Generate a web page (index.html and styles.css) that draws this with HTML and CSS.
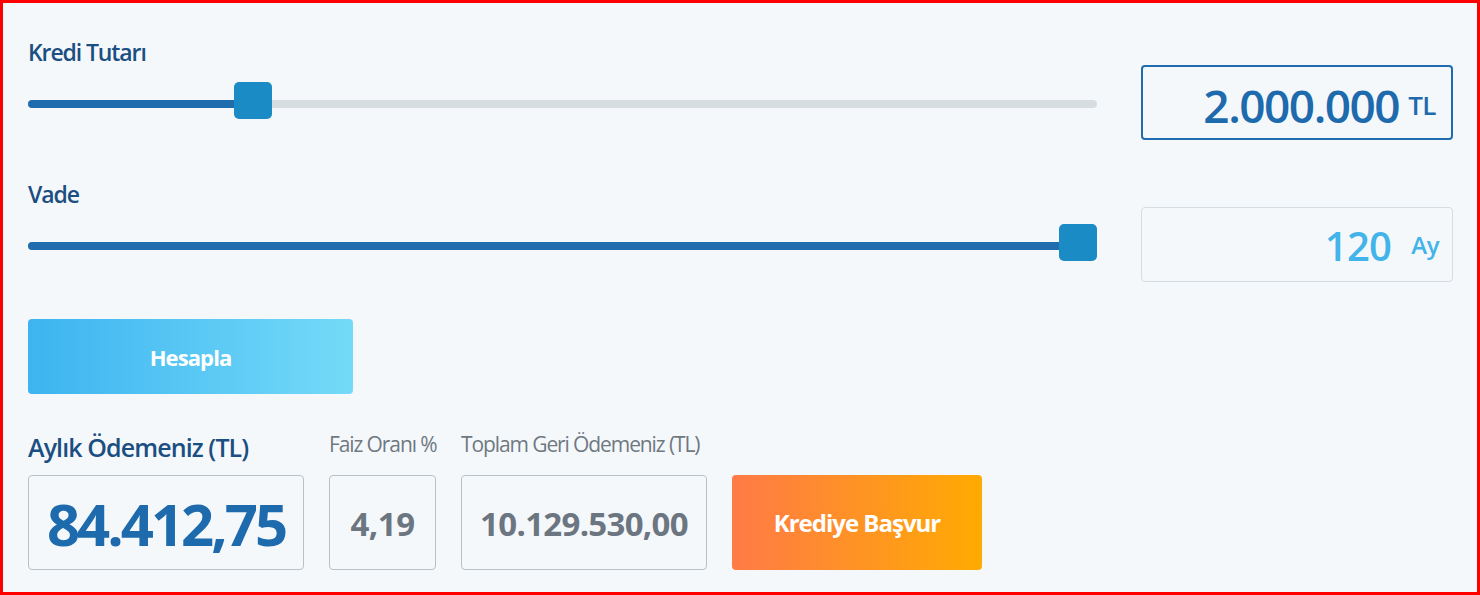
FILE: index.html
```html
<!DOCTYPE html>
<html lang="tr">
<head>
<meta charset="utf-8">
<title>Kredi Hesaplama</title>
<link rel="stylesheet" href="styles.css">
</head>
<body>
<div class="frame">
  <div class="field-row">
    <div class="field-main">
      <div class="field-label">Kredi Tutarı</div>
      <div class="slider" style="--p:0.2">
        <div class="track"><div class="fill"></div></div>
        <div class="thumb"></div>
      </div>
    </div>
    <div class="value-box value-box--active">
      <span class="value-text"><span class="amount">2.000.000</span><span class="unit unit--tl">TL</span></span>
    </div>
  </div>

  <div class="field-row field-row--second">
    <div class="field-main">
      <div class="field-label">Vade</div>
      <div class="slider" style="--p:1">
        <div class="track"><div class="fill"></div></div>
        <div class="thumb"></div>
      </div>
    </div>
    <div class="value-box value-box--term">
      <span class="value-text"><span class="term">120</span><span class="unit unit--ay">Ay</span></span>
    </div>
  </div>

  <button class="btn-calc">Hesapla</button>

  <div class="results">
    <div class="res-label res-label--main">Aylık Ödemeniz (TL)</div>
    <div class="res-label">Faiz Oranı %</div>
    <div class="res-label">Toplam Geri Ödemeniz (TL)</div>
    <div class="res-empty"></div>
    <div class="res-box res-box--main">84.412,75</div>
    <div class="res-box res-box--rate">4,19</div>
    <div class="res-box">10.129.530,00</div>
    <button class="btn-apply">Krediye Başvur</button>
  </div>
</div>
</body>
</html>
```
FILE: styles.css
```css
html, body {
  margin: 0;
  padding: 0;
}

body {
  font-family: "Open Sans", "Noto Sans", sans-serif;
  font-stretch: 90%;
}

.frame {
  box-sizing: border-box;
  width: 1480px;
  height: 595px;
  border: 3px solid #ff0000;
  background: #f5f8fb;
  padding: 36px 24px 0 25px;
  display: flex;
  flex-direction: column;
  align-items: flex-start;
}

.field-row {
  align-self: stretch;
  display: flex;
  align-items: flex-end;
  gap: 44px;
}

.field-row--second {
  margin-top: 41px;
}

.field-main {
  flex: 1;
  display: flex;
  flex-direction: column;
}

.field-label {
  font-size: 23px;
  line-height: 26px;
  font-weight: 600;
  color: #1b4f82;
  letter-spacing: -1.1px;
}

.slider {
  position: relative;
  height: 75px;
  display: flex;
  align-items: center;
}

.track {
  width: 100%;
  height: 8px;
  border-radius: 4px;
  background: #d6dde1;
  margin-top: 2px;
  overflow: hidden;
}

.fill {
  height: 100%;
  width: calc((100% - 38px) * var(--p) + 19px);
  background: #1f6cae;
}

.thumb {
  position: absolute;
  top: 17px;
  left: calc((100% - 38px) * var(--p));
  width: 38px;
  height: 37px;
  border-radius: 5px;
  background: #1b8bc6;
}

.value-box {
  box-sizing: border-box;
  width: 312px;
  height: 75px;
  border: 1px solid #d6dde2;
  border-radius: 4px;
  display: flex;
  align-items: center;
  justify-content: flex-end;
  padding: 11px 13px 0 0;
  white-space: nowrap;
}

.value-box--active {
  border: 2px solid #1f6cae;
  padding: 17px 15px 0 0;
}

.value-text {
  line-height: 46px;
}

.amount {
  font-size: 46px;
  font-weight: 600;
  color: #1d6aad;
  letter-spacing: -1.5px;
}

.unit {
  font-weight: 700;
}

.unit--tl {
  font-size: 26px;
  font-weight: 600;
  color: #1d6aad;
  margin-left: 9px;
  vertical-align: 8px;
  letter-spacing: -0.5px;
}

.term {
  font-size: 40px;
  font-weight: 600;
  color: #42b4ea;
  letter-spacing: -0.7px;
}

.unit--ay {
  font-size: 24px;
  font-weight: 600;
  color: #42b4ea;
  margin-left: 20px;
  vertical-align: 7px;
  letter-spacing: -0.5px;
}

.btn-calc {
  margin-top: 37px;
  width: 325px;
  height: 75px;
  border: 0;
  border-radius: 4px;
  background: linear-gradient(90deg, #3db4f0 0%, #74daf8 100%);
  color: #ffffff;
  font-family: inherit;
  font-stretch: 90%;
  font-size: 22px;
  font-weight: 700;
  letter-spacing: -0.9px;
  padding: 0;
}

.results {
  margin-top: 37px;
  display: grid;
  grid-template-columns: 276px 107px 246px 250px;
  grid-template-rows: 44px 95px;
  column-gap: 25px;
}

.res-label {
  align-self: end;
  font-size: 21px;
  line-height: 30px;
  font-weight: 400;
  color: #6f7982;
  white-space: nowrap;
  padding-bottom: 16px;
  letter-spacing: -1.1px;
}

.res-label--main {
  font-size: 25px;
  font-weight: 600;
  color: #1b4f82;
  padding-bottom: 13px;
  letter-spacing: -0.9px;
}

.res-box {
  box-sizing: border-box;
  border: 1px solid #b9c0c6;
  border-radius: 4px;
  display: flex;
  align-items: center;
  justify-content: center;
  font-size: 33px;
  font-weight: 700;
  color: #6b7681;
  padding-top: 2px;
  white-space: nowrap;
  letter-spacing: -0.7px;
}

.res-box--rate {
  letter-spacing: -0.5px;
}

.res-box--main {
  font-size: 58px;
  color: #1d6aad;
  letter-spacing: -3px;
  padding-top: 2px;
}

.btn-apply {
  border: 0;
  border-radius: 4px;
  background: linear-gradient(90deg, #ff7a47 0%, #ffab02 100%);
  color: #ffffff;
  font-family: inherit;
  font-stretch: 90%;
  font-size: 24px;
  font-weight: 700;
  letter-spacing: -1px;
  padding: 0;
}
```
